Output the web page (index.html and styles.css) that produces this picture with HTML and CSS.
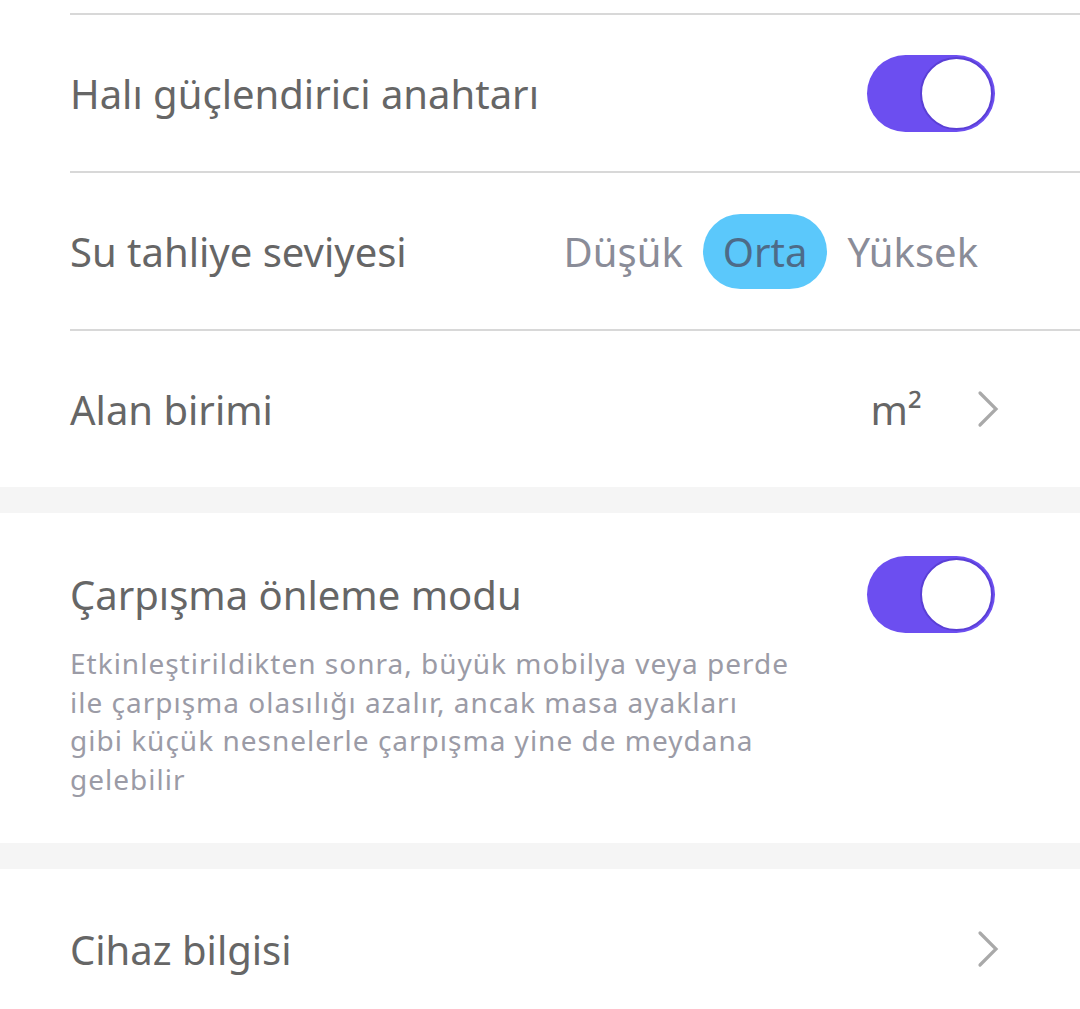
FILE: index.html
```html
<!DOCTYPE html>
<html lang="tr">
<head>
<meta charset="utf-8">
<link rel="stylesheet" href="styles.css">
</head>
<body>
<div class="section first">
  <div class="row">
    <span class="label">Halı güçlendirici anahtarı</span>
    <span class="toggle on"><span class="knob"></span></span>
  </div>
  <div class="row">
    <span class="label">Su tahliye seviyesi</span>
    <div class="segments">
      <span class="seg">Düşük</span>
      <span class="seg active">Orta</span>
      <span class="seg">Yüksek</span>
    </div>
  </div>
  <div class="row nav">
    <span class="label">Alan birimi</span>
    <div class="value-group">
      <span class="value">m²</span>
      <svg class="chevron" viewBox="0 0 24 40" width="24" height="40"><path d="M4 4 L20 20 L4 36" fill="none" stroke="#a9a9a9" stroke-width="3.2" stroke-linecap="round" stroke-linejoin="miter"/></svg>
    </div>
  </div>
</div>
<div class="gap"></div>
<div class="section block">
  <div class="head">
    <span class="label">Çarpışma önleme modu</span>
    <span class="toggle on"><span class="knob"></span></span>
  </div>
  <p class="desc">Etkinleştirildikten sonra, büyük mobilya veya perde ile çarpışma olasılığı azalır, ancak masa ayakları gibi küçük nesnelerle çarpışma yine de meydana gelebilir</p>
</div>
<div class="gap"></div>
<div class="section">
  <div class="row nav plain">
    <span class="label">Cihaz bilgisi</span>
    <svg class="chevron" viewBox="0 0 24 40" width="24" height="40"><path d="M4 4 L20 20 L4 36" fill="none" stroke="#a9a9a9" stroke-width="3.2" stroke-linecap="round" stroke-linejoin="miter"/></svg>
  </div>
</div>
</body>
</html>
```

FILE: styles.css
```css
html, body {
  margin: 0;
  padding: 0;
  background: #ffffff;
}
body {
  width: 1080px;
  height: 1009px;
  overflow: hidden;
  font-family: "Noto Sans", "Open Sans", sans-serif;
  color: #666666;
}
.section {
  padding-left: 70px;
  background: #ffffff;
}
.section.first {
  padding-top: 13px;
}
.row {
  display: flex;
  align-items: center;
  justify-content: space-between;
  height: 156px;
  padding-right: 85px;
  border-top: 2px solid #d8d8d8;
}
.row.nav {
  padding-right: 80px;
}
.row.plain {
  border-top: none;
  height: 160px;
}
.label {
  font-size: 40px;
  color: #666666;
}
.toggle {
  display: flex;
  justify-content: flex-end;
  align-items: center;
  width: 128px;
  height: 77px;
  border-radius: 39px;
  background: #6c4ef0;
  box-sizing: border-box;
  padding: 2px;
}
.knob {
  width: 73px;
  height: 73px;
  border-radius: 50%;
  background: #ffffff;
  box-sizing: border-box;
  border: 2px solid #5a3fd6;
}
.segments {
  display: flex;
  align-items: center;
  margin-right: -3px;
}
.seg {
  font-size: 40px;
  color: #8a8c98;
  padding: 0 20px;
  height: 75px;
  line-height: 75px;
  border-radius: 38px;
}
.seg.active {
  background: #5bc8fb;
  color: #4d6b88;
}
.value-group {
  display: flex;
  align-items: center;
  gap: 54px;
}
.value {
  font-size: 40px;
  color: #666666;
}
.chevron {
  display: block;
}
.gap {
  height: 26px;
  background: #f5f5f5;
}
.block {
  height: 330px;
  box-sizing: border-box;
  padding-top: 41px;
  padding-right: 85px;
}
.head {
  display: flex;
  align-items: center;
  justify-content: space-between;
  height: 80px;
}
.desc {
  margin: 10px 0 0;
  max-width: 722px;
  font-size: 28px;
  letter-spacing: 1px;
  line-height: 38.5px;
  color: #9b9ba6;
}
```
